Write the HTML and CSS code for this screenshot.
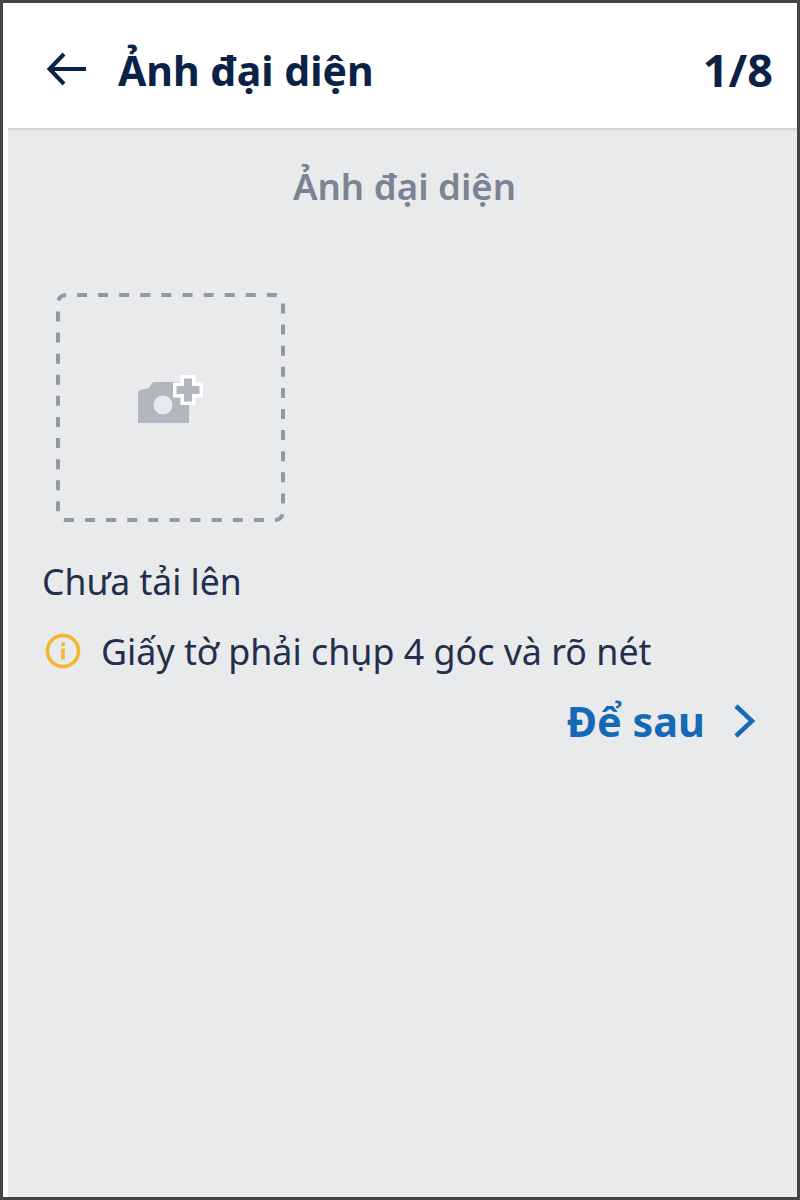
FILE: index.html
```html
<!DOCTYPE html>
<html>

<head>
    <meta name="viewport" content="width=device-width, initial-scale=1">
    <link rel="stylesheet" href="styles.css">
</head>

<body>
    <div class="screen">
        <div class="topbar">
            <svg class="back" width="42" height="36" viewBox="0 0 42 36">
                <path d="M40 18H4M18 3 3.500 18 18 33" fill="none" stroke="#0b2247" stroke-width="4"/>
            </svg>
            <h1 class="title">Ảnh đại diện</h1>
            <span class="step">1/8</span>
        </div>

        <div class="content">
            <h2 class="section-title">Ảnh đại diện</h2>

            <svg class="upload" width="230" height="229" viewBox="0 0 230 229">
                <rect x="2" y="2" width="225" height="225" rx="8" fill="none" stroke="#9298a6" stroke-width="4" stroke-dasharray="10 11.100" stroke-dashoffset="-11"/>
                <path d="M82 100 Q82 98 84 97 L93 95 L96 90 Q97 89 99 89 H133 V130 H82 Z" fill="#b3b6bc"/>
                <circle cx="107" cy="112" r="9.500" fill="#e8eaec"/>
                <path d="M132 82V112M117 97H147" fill="none" stroke="#fff" stroke-width="15"/>
                <path d="M132 85.500V108.500M120.500 97H143.500" fill="none" stroke="#b3b6bc" stroke-width="8"/>
            </svg>

            <p class="status">Chưa tải lên</p>

            <div class="notice">
                <svg width="36" height="36" viewBox="0 0 36 36">
                    <circle cx="18" cy="18" r="15.500" fill="none" stroke="#f7b52c" stroke-width="3.500"/>
                    <rect x="16.200" y="9.500" width="3.600" height="3.600" fill="#f7b52c"/>
                    <rect x="16.200" y="15.500" width="3.600" height="11" fill="#f7b52c"/>
                </svg>
                <span>Giấy tờ phải chụp 4 góc và rõ nét</span>
            </div>

            <div class="later">
                <span>Để sau</span>
                <svg width="24" height="34" viewBox="0 0 24 34">
                    <path d="M3 2 19 17 3 32" fill="none" stroke="#1669b5" stroke-width="4.500"/>
                </svg>
            </div>
        </div>
    </div>
</body>

</html>
```

FILE: styles.css
```css
* {
    box-sizing: border-box;
}

html, body {
    margin: 0;
    padding: 0;
}

body {
    font-family: "Noto Sans", "Open Sans", sans-serif;
}

.screen {
    width: 800px;
    height: 1200px;
    border: 3px solid #444446;
    background: #fff;
    display: flex;
    flex-direction: column;
}

.topbar {
    height: 125px;
    flex-shrink: 0;
    display: flex;
    align-items: center;
    padding: 6px 24px 0 43px;
}

.back {
    margin-right: 30px;
}

.title {
    margin: 2px 0 0;
    flex: 1;
    font-size: 41px;
    line-height: 50px;
    font-weight: 700;
    color: #0b2247;
}

.step {
    margin-top: 2px;
    font-size: 45px;
    line-height: 50px;
    font-weight: 700;
    color: #0b2247;
}

.content {
    flex: 1;
    margin-left: 5px;
    background: #e8eaec;
    border-top: 2px solid #d2d4d7;
    padding: 0 34px;
}

.section-title {
    margin: 31px 0 0 4px;
    text-align: center;
    font-size: 36.6px;
    line-height: 50px;
    font-weight: 600;
    color: #7a8493;
}

.upload {
    display: block;
    margin: 82px 0 0 14px;
}

.status {
    margin: 34px 0 0;
    font-size: 35.5px;
    line-height: 50px;
    color: #232f4b;
}

.notice {
    display: flex;
    align-items: center;
    gap: 20px;
    margin: 20px 0 0 3px;
    font-size: 35.8px;
    line-height: 50px;
    color: #232f4b;
}

.later {
    display: flex;
    align-items: center;
    justify-content: flex-end;
    gap: 28px;
    margin: 20px 6px 0 0;
    font-size: 41.4px;
    line-height: 50px;
    font-weight: 700;
    color: #1669b5;
}
```
